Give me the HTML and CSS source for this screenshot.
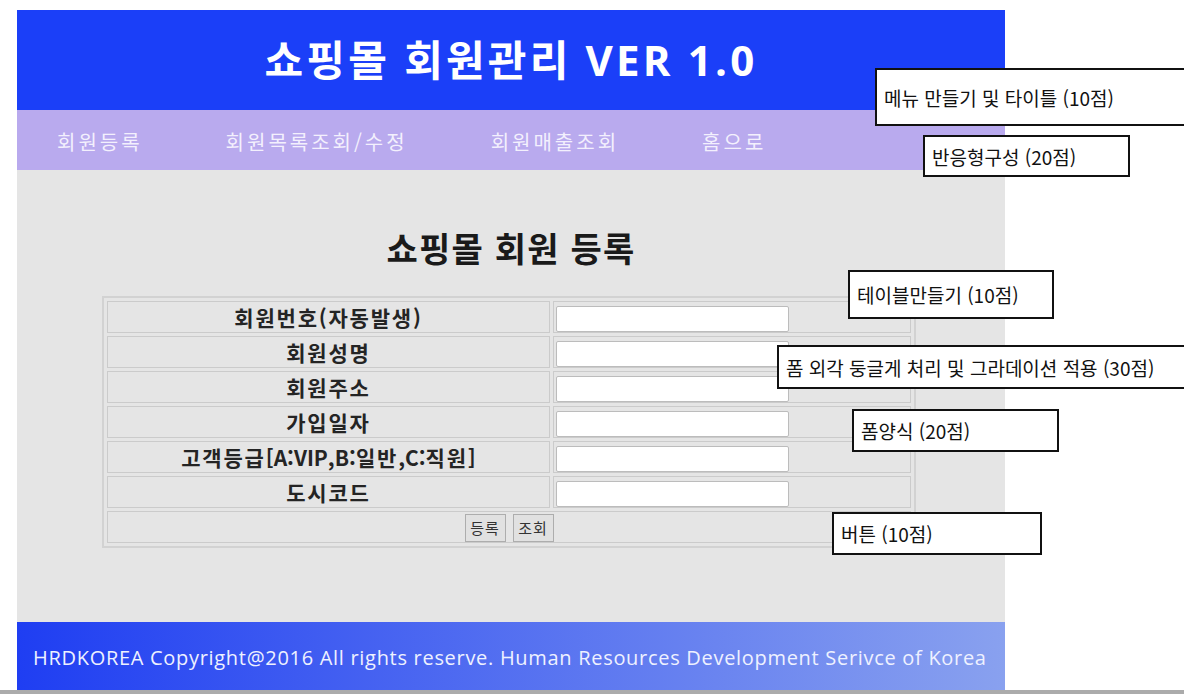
FILE: index.html
```html
<!DOCTYPE html>
<html lang="ko">
<head>
<meta charset="utf-8">
<title>쇼핑몰 회원관리 VER 1.0</title>
<link rel="stylesheet" href="styles.css">
</head>
<body>
<div class="page">
  <header class="top">
    <h1 class="title">쇼핑몰 회원관리 VER 1.0</h1>
  </header>
  <nav class="menu">
    <a class="menu-item">회원등록</a>
    <a class="menu-item">회원목록조회/수정</a>
    <a class="menu-item">회원매출조회</a>
    <a class="menu-item">홈으로</a>
  </nav>
  <main class="content">
    <h2 class="form-title">쇼핑몰 회원 등록</h2>
    <form class="join-form">
      <table class="form-table">
        <tr><td class="label">회원번호(자동발생)</td><td class="field"><input class="text-input" type="text"></td></tr>
        <tr><td class="label">회원성명</td><td class="field"><input class="text-input" type="text"></td></tr>
        <tr><td class="label">회원주소</td><td class="field"><input class="text-input" type="text"></td></tr>
        <tr><td class="label">가입일자</td><td class="field"><input class="text-input" type="text"></td></tr>
        <tr><td class="label">고객등급<span class="code">[A:VIP,B:</span>일반<span class="code">,C:</span>직원<span class="code">]</span></td><td class="field"><input class="text-input" type="text"></td></tr>
        <tr><td class="label">도시코드</td><td class="field"><input class="text-input" type="text"></td></tr>
        <tr><td class="actions" colspan="2"><div class="actions-row"><button class="btn" type="button">등록</button><button class="btn" type="button">조회</button></div></td></tr>
      </table>
    </form>
  </main>
  <footer class="bottom">HRDKOREA Copyright@2016 All rights reserve. Human Resources Development Serivce of Korea</footer>
</div>
<div class="baseline"></div>

<div class="note note-menu">메뉴 만들기 및 타이틀 (10점)</div>
<div class="note note-responsive">반응형구성 (20점)</div>
<div class="note note-table">테이블만들기 (10점)</div>
<div class="note note-round">폼 외각 둥글게 처리 및 그라데이션 적용 (30점)</div>
<div class="note note-form">폼양식 (20점)</div>
<div class="note note-button">버튼 (10점)</div>
</body>
</html>
```

FILE: styles.css
```css
* {
  box-sizing: border-box;
}

html, body {
  margin: 0;
  padding: 0;
  background: #ffffff;
}

body {
  position: relative;
  width: 1184px;
  height: 694px;
  overflow: hidden;
  font-family: "Open Sans", "Noto Sans CJK KR", sans-serif;
  color: #222;
}

.page {
  width: 988px;
  margin: 10px 0 0 17px;
}

/* header */
.top {
  height: 100px;
  background: #1b3ff8;
  display: flex;
  align-items: center;
  justify-content: center;
}

.title {
  margin: 0;
  color: #ffffff;
  font-size: 42px;
  font-weight: 700;
  letter-spacing: 3.2px;
  line-height: 1;
}

/* menu */
.menu {
  height: 60px;
  background: #b9aaee;
  display: flex;
  align-items: center;
  gap: 83px;
  padding: 2px 0 0 40px;
}

.menu-item {
  color: #f3f0fd;
  font-family: "Noto Sans CJK KR", sans-serif;
  font-size: 20px;
  letter-spacing: 3px;
  text-decoration: none;
}

/* content */
.content {
  height: 452px;
  background: #e5e5e5;
  padding-top: 58px;
}

.form-title {
  margin: 0 0 28px;
  text-align: center;
  font-family: "Noto Sans CJK KR", sans-serif;
  font-size: 34px;
  line-height: 40px;
  font-weight: 700;
  letter-spacing: 1.2px;
  color: #1a1a1a;
}

.join-form {
  margin: 0;
}

.form-table {
  width: 814px;
  margin-left: 85px;
  border: 2px solid #d2d2d2;
  border-spacing: 3px;
}

.form-table td {
  border: 1px solid #cbcbcb;
  padding: 2px;
}

.form-table td.field {
  padding: 4px 2px 0;
}

.label {
  width: 443px;
  text-align: center;
  font-family: "Noto Sans CJK KR", sans-serif;
  font-size: 21px;
  font-weight: 700;
  letter-spacing: 1.8px;
  line-height: 26px;
  color: #242424;
}

.label .code {
  letter-spacing: 0;
}

.text-input {
  display: block;
  width: 233px;
  height: 26px;
  margin: 0;
  border: 1px solid #bcbcbc;
  border-radius: 2px;
  background: #ffffff;
}

.form-table td.actions {
  padding: 2px 2px 0;
}

.actions-row {
  display: flex;
  justify-content: center;
  gap: 7px;
}

.btn {
  height: 28px;
  width: 41px;
  padding: 0;
  margin: 0;
  border: 1px solid #adadad;
  background: #e1e1e1;
  color: #333;
  font-family: "Noto Sans CJK KR", sans-serif;
  font-size: 15px;
  letter-spacing: 1px;
  line-height: 26px;
}

/* footer */
.bottom {
  height: 68px;
  background: linear-gradient(to right, #1f3ef2, #89a1ef);
  color: #eef1ff;
  font-size: 20px;
  letter-spacing: 0.7px;
  padding: 3px 0 0 16px;
  display: flex;
  align-items: center;
  white-space: nowrap;
}

.baseline {
  height: 4px;
  background: #ababab;
}

/* annotation notes */
.note {
  position: absolute;
  display: flex;
  align-items: center;
  padding-left: 7px;
  background: #ffffff;
  border: 2px solid #111;
  color: #111;
  font-family: "Noto Sans CJK KR", sans-serif;
  font-size: 19px;
  white-space: nowrap;
}

.note-menu { left: 875px; top: 68px; width: 330px; height: 58px; }
.note-responsive { left: 923px; top: 135px; width: 207px; height: 42px; }
.note-table { left: 848px; top: 270px; width: 206px; height: 49px; }
.note-round { left: 777px; top: 345px; width: 430px; height: 44px; }
.note-form { left: 852px; top: 409px; width: 207px; height: 43px; }
.note-button { left: 832px; top: 512px; width: 210px; height: 43px; }
```
